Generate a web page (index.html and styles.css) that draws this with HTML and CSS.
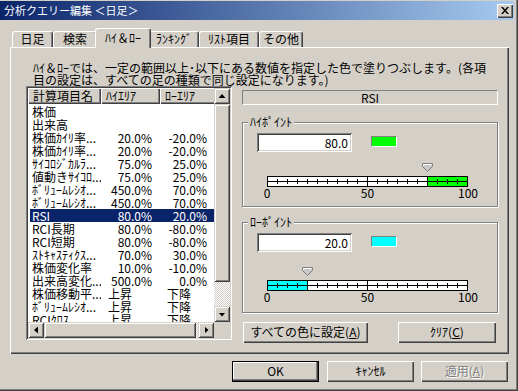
FILE: index.html
```html
<!DOCTYPE html>
<html lang="ja">
<head>
  <meta charset="UTF-8" />
  <title>分析クエリー編集</title>
  <link rel="stylesheet" href="styles.css">
</head>
<body>
  <div class="window">
    <!-- Title bar -->
    <div class="titlebar">
      <span class="title">分析クエリー編集 ＜日足＞</span>
      <span class="close-btn">
        <svg width="8" height="7" viewBox="0 0 8 7"><path d="M0 0h2l2 2.4L6 0h2L5 3.5 8 7H6L4 4.6 2 7H0l3-3.5z" fill="#000"/></svg>
      </span>
    </div>

    <!-- Tabs -->
    <div class="tabs">
      <div class="tab w-day">日足</div>
      <div class="tab w-search">検索</div>
      <div class="tab active">ﾊｲ＆ﾛｰ</div>
      <div class="tab w-rank">ﾗﾝｷﾝｸﾞ</div>
      <div class="tab w-list">ﾘｽﾄ項目</div>
      <div class="tab w-other">その他</div>
    </div>

    <div class="panel">
      <p class="desc">ﾊｲ＆ﾛｰでは、一定の範囲以上･以下にある数値を指定した色で塗りつぶします。(各項<br>目の設定は、すべての足の種類で同じ設定になります。)</p>

      <div class="panel-main">
        <!-- List view -->
        <div class="listview">
          <div class="lv-content">
            <div class="lv-header">
              <span class="col-name">計算項目名</span>
              <span class="col-hi">ﾊｲｴﾘｱ</span>
              <span class="col-lo">ﾛｰｴﾘｱ</span>
            </div>
            <div class="lv-rows">
              <div class="lv-row"><span class="name">株価</span><span></span><span></span></div>
              <div class="lv-row"><span class="name">出来高</span><span></span><span></span></div>
              <div class="lv-row"><span class="name">株価ｶｲﾘ率...</span><span class="hi">20.0%</span><span class="lo">-20.0%</span></div>
              <div class="lv-row"><span class="name">株価ｶｲﾘ率...</span><span class="hi">20.0%</span><span class="lo">-20.0%</span></div>
              <div class="lv-row"><span class="name">ｻｲｺﾛｼﾞｶﾙﾗ...</span><span class="hi">75.0%</span><span class="lo">25.0%</span></div>
              <div class="lv-row"><span class="name">値動きｻｲｺﾛ...</span><span class="hi">75.0%</span><span class="lo">25.0%</span></div>
              <div class="lv-row"><span class="name">ﾎﾞﾘｭｰﾑﾚｼｵ...</span><span class="hi">450.0%</span><span class="lo">70.0%</span></div>
              <div class="lv-row"><span class="name">ﾎﾞﾘｭｰﾑﾚｼｵ...</span><span class="hi">450.0%</span><span class="lo">70.0%</span></div>
              <div class="lv-row sel"><span class="name">RSI</span><span class="hi">80.0%</span><span class="lo">20.0%</span></div>
              <div class="lv-row"><span class="name">RCI長期</span><span class="hi">80.0%</span><span class="lo">-80.0%</span></div>
              <div class="lv-row"><span class="name">RCI短期</span><span class="hi">80.0%</span><span class="lo">-80.0%</span></div>
              <div class="lv-row"><span class="name">ｽﾄｷｬｽﾃｨｸｽ...</span><span class="hi">70.0%</span><span class="lo">30.0%</span></div>
              <div class="lv-row"><span class="name">株価変化率</span><span class="hi">10.0%</span><span class="lo">-10.0%</span></div>
              <div class="lv-row"><span class="name">出来高変化...</span><span class="hi">500.0%</span><span class="lo">0.0%</span></div>
              <div class="lv-row"><span class="name">株価移動平...</span><span class="txt">上昇</span><span class="txt">下降</span></div>
              <div class="lv-row"><span class="name">ﾎﾞﾘｭｰﾑﾚｼｵ...</span><span class="txt">上昇</span><span class="txt">下降</span></div>
              <div class="lv-row"><span class="name">RCIｸﾛｽ</span><span class="txt">上昇</span><span class="txt">下降</span></div>
            </div>
          </div>
          <div class="vscroll">
            <span class="sb-btn"><i class="arr arr-up"></i></span>
            <span class="thumb thumb-v"></span>
            <span class="track"></span>
            <span class="sb-btn"><i class="arr arr-down"></i></span>
          </div>
          <div class="hscroll">
            <span class="sb-btn"><i class="arr arr-left"></i></span>
            <span class="thumb thumb-h"></span>
            <span class="track"></span>
            <span class="sb-btn"><i class="arr arr-right"></i></span>
          </div>
          <div class="corner"></div>
        </div>

        <!-- Right side settings -->
        <div class="side">
          <div class="rsi-box">RSI</div>

          <div class="group group-hi">
            <span class="group-label">ﾊｲﾎﾟｲﾝﾄ</span>
            <div class="field-row">
              <div class="num-input">80.0</div>
              <div class="swatch swatch-green"></div>
            </div>
            <div class="slider slider-hi">
              <svg class="marker" style="margin-left:179px" width="11" height="9" viewBox="0 0 11 9">
                <polygon points="0.5,0.5 10.5,0.5 10.5,3.5 5.5,8.5 0.5,3.5" fill="#c8c8c8" stroke="#808080"/>
                <polyline points="1.5,3 1.5,1.5 9.5,1.5" fill="none" stroke="#fff"/>
              </svg>
              <svg class="scale" width="201" height="11" viewBox="0 0 201 11" shape-rendering="crispEdges">
                <rect x="0.5" y="0.5" width="200" height="10" fill="#fff" stroke="#000"/>
                <rect x="160" y="1" width="40" height="9" fill="#00ff00"/>
                <path d="M0 5.5H201M10.5 3V8M20.5 3V8M30.5 3V8M40.5 3V8M50.5 3V8M60.5 3V8M70.5 3V8M80.5 3V8M90.5 3V8M110.5 3V8M120.5 3V8M130.5 3V8M140.5 3V8M150.5 3V8M170.5 3V8M180.5 3V8M190.5 3V8M100.5 0V11M160.5 0V11" stroke="#000"/>
              </svg>
              <div class="scale-labels"><span>0</span><span>50</span><span>100</span></div>
            </div>
          </div>

          <div class="group group-lo">
            <span class="group-label">ﾛｰﾎﾟｲﾝﾄ</span>
            <div class="field-row">
              <div class="num-input">20.0</div>
              <div class="swatch swatch-cyan"></div>
            </div>
            <div class="slider slider-lo">
              <svg class="marker" style="margin-left:59px" width="11" height="9" viewBox="0 0 11 9">
                <polygon points="0.5,0.5 10.5,0.5 10.5,3.5 5.5,8.5 0.5,3.5" fill="#c8c8c8" stroke="#808080"/>
                <polyline points="1.5,3 1.5,1.5 9.5,1.5" fill="none" stroke="#fff"/>
              </svg>
              <svg class="scale" width="201" height="11" viewBox="0 0 201 11" shape-rendering="crispEdges">
                <rect x="0.5" y="0.5" width="200" height="10" fill="#fff" stroke="#000"/>
                <rect x="1" y="1" width="40" height="9" fill="#00ffff"/>
                <path d="M0 5.5H201M10.5 3V8M20.5 3V8M30.5 3V8M50.5 3V8M60.5 3V8M70.5 3V8M80.5 3V8M90.5 3V8M110.5 3V8M120.5 3V8M130.5 3V8M140.5 3V8M150.5 3V8M160.5 3V8M170.5 3V8M180.5 3V8M190.5 3V8M100.5 0V11M40.5 0V11" stroke="#000"/>
              </svg>
              <div class="scale-labels"><span>0</span><span>50</span><span>100</span></div>
            </div>
          </div>

          <div class="side-buttons">
            <div class="btn btn-all">すべての色に設定(<u>A</u>)</div>
            <div class="btn btn-clear">ｸﾘｱ(<u>C</u>)</div>
          </div>
        </div>
      </div>
    </div>

    <!-- Dialog buttons -->
    <div class="actions">
      <div class="btn btn-ok">OK</div>
      <div class="btn">ｷｬﾝｾﾙ</div>
      <div class="btn disabled">適用(<u>A</u>)</div>
    </div>
  </div>
</body>
</html>
```

FILE: styles.css
```css
/* Global */
* {
  box-sizing: border-box;
}
body {
  margin: 0;
  background: #d4d0c8;
  font-family: "Noto Sans CJK JP", "Noto Sans", sans-serif;
  font-size: 12px;
  color: #000;
}
.window {
  width: 518px;
  height: 391px;
  overflow: hidden;
  padding-top: 1px;
  background: #d4d0c8;
  box-shadow: inset -1px -1px 0 #404040, inset -2px -2px 0 #808080;
}

/* Title bar */
.titlebar {
  width: 514px;
  height: 19px;
  display: flex;
  align-items: center;
  justify-content: space-between;
  padding: 0 1px 0 4px;
  background: linear-gradient(to right, #0a246a, #a6caf0);
  color: #fff;
}
.title {
  font-size: 11px;
  line-height: 19px;
  white-space: pre;
}
.close-btn {
  width: 16px;
  height: 14px;
  display: flex;
  align-items: center;
  justify-content: center;
  background: #d4d0c8;
  box-shadow: inset 1px 1px 0 #fff, inset -1px -1px 0 #404040, inset -2px -2px 0 #808080;
}

/* Tabs */
.tabs {
  position: relative;
  z-index: 1;
  display: flex;
  align-items: flex-end;
  height: 19px;
  margin-top: 8px;
  padding-left: 12px;
}
.tab {
  height: 16px;
  line-height: 14px;
  text-align: center;
  white-space: nowrap;
  background: #d4d0c8;
  border: 1px solid;
  border-bottom: 0;
  border-color: #fff #404040 #fff #fff;
  border-radius: 3px 3px 0 0;
  box-shadow: inset -1px 0 0 #808080;
}
.w-day { width: 41px; }
.w-search { width: 44px; }
.w-rank { width: 50px; }
.w-list { width: 60px; }
.w-other { width: 44px; }
.tab.active {
  position: relative;
  z-index: 2;
  width: 56px;
  height: 20px;
  line-height: 17px;
  margin: 0 -2px -1px;
}

/* Tab panel */
.panel {
  width: 499px;
  height: 307px;
  margin-left: 10px;
  padding: 15px 0 0 16px;
  box-shadow: inset 1px 1px 0 #fff, inset -1px -1px 0 #404040, inset -2px -2px 0 #808080;
}
.desc {
  margin: 0 0 0 7px;
  line-height: 12px;
  white-space: nowrap;
}
.panel-main {
  display: flex;
  align-items: flex-start;
  gap: 10px;
}

/* List view */
.listview {
  width: 206px;
  height: 254px;
  padding: 2px;
  display: grid;
  grid-template-columns: 186px 16px;
  grid-template-rows: 234px 16px;
  background: #fff;
  box-shadow: inset 1px 1px 0 #808080, inset -1px -1px 0 #fff, inset 2px 2px 0 #404040, inset -2px -2px 0 #d4d0c8;
}
.lv-content {
  overflow: hidden;
  background: #fff;
}
.lv-header {
  display: flex;
  height: 16px;
}
.lv-header span {
  flex: none;
  height: 16px;
  line-height: 15px;
  padding-left: 5px;
  white-space: nowrap;
  background: #d4d0c8;
  box-shadow: inset 1px 1px 0 #fff, inset -1px -1px 0 #404040, inset -2px -2px 0 #808080;
}
.col-name { width: 73px; }
.col-hi { width: 59px; }
.col-lo { width: 70px; }
.lv-rows {
  padding-top: 1px;
}
.lv-row {
  display: grid;
  grid-template-columns: 71px 59px 54px;
  height: 13px;
  line-height: 13px;
  margin-left: 2px;
  white-space: nowrap;
}
.lv-row.sel {
  background: #0a246a;
  color: #fff;
}
.lv-row .name {
  padding-left: 2px;
  overflow-x: clip;
}
.lv-row .hi {
  text-align: right;
  padding-right: 8px;
}
.lv-row .lo {
  text-align: right;
  padding-right: 7px;
}
.lv-row .txt {
  padding-left: 7px;
}

/* Scroll bars */
.vscroll,
.hscroll {
  display: flex;
  background: repeating-conic-gradient(#fff 0 25%, #d4d0c8 0 50%) 0 0 / 2px 2px;
}
.vscroll {
  flex-direction: column;
}
.sb-btn,
.thumb {
  flex: none;
  background: #d4d0c8;
  box-shadow: inset 1px 1px 0 #d4d0c8, inset -1px -1px 0 #404040, inset 2px 2px 0 #fff, inset -2px -2px 0 #808080;
}
.sb-btn {
  width: 16px;
  height: 16px;
  display: flex;
  align-items: center;
  justify-content: center;
}
.thumb-v {
  height: 178px;
}
.thumb-h {
  width: 152px;
}
.track {
  flex: 1;
}
.corner {
  background: #d4d0c8;
}
.arr {
  display: block;
  background: #000;
}
.arr-up {
  width: 7px;
  height: 4px;
  clip-path: polygon(50% 0, 100% 100%, 0 100%);
}
.arr-down {
  width: 7px;
  height: 4px;
  margin-top: 1px;
  clip-path: polygon(0 0, 100% 0, 50% 100%);
}
.arr-left {
  width: 4px;
  height: 7px;
  clip-path: polygon(100% 0, 100% 100%, 0 50%);
}
.arr-right {
  width: 4px;
  height: 7px;
  margin-left: 1px;
  clip-path: polygon(0 0, 100% 50%, 0 100%);
}

/* Right side */
.side {
  width: 256px;
  margin-top: 4px;
}
.rsi-box {
  height: 15px;
  line-height: 13px;
  text-align: center;
  border: 1px solid;
  border-color: #808080 #fff #fff #808080;
}
.group {
  position: relative;
  border: 1px solid #808080;
  box-shadow: inset 1px 1px 0 #fff, 1px 1px 0 #fff;
}
.group-hi {
  height: 85px;
  margin-top: 17px;
}
.group-lo {
  height: 91px;
  margin-top: 15px;
}
.group-label {
  position: absolute;
  left: 5px;
  top: -7px;
  padding: 0 2px;
  line-height: 12px;
  background: #d4d0c8;
}
.field-row {
  display: flex;
  align-items: flex-start;
  padding: 10px 0 0 14px;
}
.num-input {
  width: 95px;
  height: 19px;
  line-height: 19px;
  padding-right: 4px;
  text-align: right;
  background: #fff;
  box-shadow: inset 1px 1px 0 #808080, inset -1px -1px 0 #fff, inset 2px 2px 0 #404040, inset -2px -2px 0 #d4d0c8;
}
.swatch {
  width: 26px;
  height: 11px;
  margin: 3px 0 0 19px;
  border: 1px solid;
  border-color: #808080 #fff #fff #808080;
}
.swatch-green { background: #00ff00; }
.swatch-cyan { background: #00ffff; }
.slider-hi { margin-top: 11px; }
.slider-lo { margin-top: 15px; }
.marker {
  display: block;
}
.scale {
  display: block;
  margin: 4px 0 0 24px;
}
.scale-labels {
  display: flex;
  justify-content: space-between;
  width: 241px;
  margin-left: 4px;
}
.scale-labels span {
  width: 40px;
  text-align: center;
  line-height: 12px;
}
.side-buttons {
  display: flex;
  justify-content: space-between;
  margin-top: 9px;
  padding: 0 2px 0 1px;
}

/* Push buttons */
.btn {
  height: 21px;
  line-height: 20px;
  text-align: center;
  white-space: nowrap;
  background: #d4d0c8;
  box-shadow: inset 1px 1px 0 #fff, inset -1px -1px 0 #404040, inset -2px -2px 0 #808080;
}
.btn-all { width: 125px; }
.btn-clear { width: 98px; }
.actions {
  display: flex;
  gap: 7px;
  margin: 7px 0 0 232px;
}
.actions .btn {
  width: 87px;
}
.actions .btn-ok {
  margin-right: 1px;
  box-shadow: inset 0 0 0 1px #000, inset -2px -2px 0 #404040, inset -3px -3px 0 #808080, inset 2px 2px 0 #fff;
}
.btn.disabled {
  color: #808080;
  text-shadow: 1px 1px 0 #fff;
}
```
